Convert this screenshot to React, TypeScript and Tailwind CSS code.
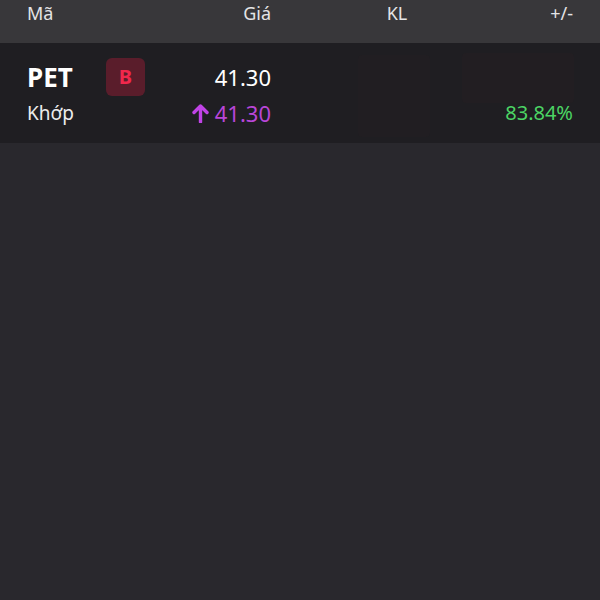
export default function App() {
  return (
    <div
      className="w-[600px] h-[600px] bg-[#29282d] overflow-hidden"
      style={{ fontFamily: '"Noto Sans", "Liberation Sans", sans-serif' }}
    >
      {/* Header */}
      <div className="h-[43px] bg-[#38373a] px-[27px] grid grid-cols-[244px_252px_50px] text-[18px] leading-none text-[#e4e4e6] pt-[4px]">
        <div className="flex justify-between">
          <span>Mã</span>
          <span>Giá</span>
        </div>
        <div className="text-center">KL</div>
        <div className="text-right">+/-</div>
      </div>

      {/* Row */}
      <div className="relative h-[100px] bg-[#1f1e22] px-[27px] grid grid-cols-[244px_252px_50px]">
        {/* faint volume bars */}
        <div className="absolute left-[358px] top-[12px] w-[72px] h-[82px] bg-[#211e22] rounded-sm" />
        <div className="absolute left-[462px] top-[10px] w-[112px] h-[50px] bg-[#221e22] rounded-sm" />

        <div className="relative flex flex-col pt-[15px]">
          <div className="flex items-center h-[38px]">
            <span className="text-[26px] font-bold text-white leading-none w-[79px]">PET</span>
            <span className="w-[39px] h-[38px] rounded-md bg-[#5a1d2b] flex items-center justify-center text-[20px] font-bold text-[#f0284c] leading-none">
              B
            </span>
            <span className="ml-auto text-[22px] text-white leading-none">41.30</span>
          </div>
          <div className="flex items-center h-[30px] mt-[2px]">
            <span className="text-[19px] text-[#ececec] leading-none">Khớp</span>
            <span className="ml-auto flex items-center gap-[6px] text-[22px] text-[#b846d8] leading-none">
              <svg width="17" height="20" viewBox="0 0 17 20" fill="none">
                <path d="M8.5 19V3M2 9.5l6.5-6.5 6.5 6.5" stroke="#c043e6" strokeWidth="3.4" strokeLinecap="round" strokeLinejoin="round" />
              </svg>
              41.30
            </span>
          </div>
        </div>
        <div />
        <div className="relative flex flex-col items-end pt-[60px]">
          <span className="text-[20px] text-[#4cd464] leading-none whitespace-nowrap">83.84%</span>
        </div>
      </div>
    </div>
  );
}
